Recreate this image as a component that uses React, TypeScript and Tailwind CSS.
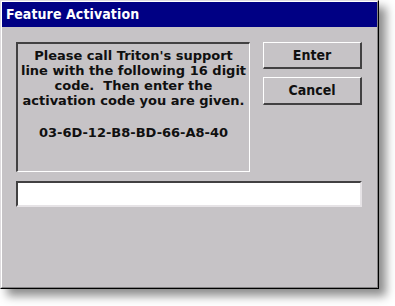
import React from "react";

export default function App() {
  const font = { fontFamily: '"DejaVu Sans Condensed", "DejaVu Sans", sans-serif' };
  const msg = { fontFamily: '"DejaVu Sans", sans-serif' };
  return (
    <div className="w-[395px] h-[306px] bg-white relative" style={font}>
      <div className="w-[379px] h-[289px] flex flex-col bg-[#c6c3c6] border-t border-l border-t-[#dedbde] border-l-[#dedbde] border-r border-b border-r-black border-b-black shadow-[7px_7px_9px_rgba(0,0,0,0.45)]">
        <div className="flex flex-col flex-1 border-t border-l border-white border-r border-b border-r-[#848284] border-b-[#848284]">
          <div className="h-[25px] bg-[#000084] text-white font-bold text-[14px] leading-[25px] pl-[4px] tracking-[0.1px]">
            Feature Activation
          </div>
          <div className="flex flex-col pl-[14px] pt-[15px]">
            <div className="flex">
              <div
                className="w-[234px] h-[130px] border-t-2 border-l-2 border-t-[#424142] border-l-[#424142] border-r border-b border-r-white border-b-white text-[13px] font-bold leading-[15px] text-[#101010] text-center pt-[4px] whitespace-nowrap"
                style={msg}
              >
                <div>Please call Triton's support</div>
                <div>line with the following 16 digit</div>
                <div>code.&nbsp; Then enter the</div>
                <div>activation code you are given.</div>
                <div className="mt-[17px]">03-6D-12-B8-BD-66-A8-40</div>
              </div>
              <div className="flex flex-col gap-[8px] ml-[13px]">
                <button className="w-[99px] h-[27px] border-t border-l border-white border-r-2 border-b-2 border-r-[#424142] border-b-[#424142] text-[14px] font-bold text-[#101010] flex items-center justify-center">
                  Enter
                </button>
                <button className="w-[99px] h-[28px] border-t border-l border-white border-r-2 border-b-2 border-r-[#424142] border-b-[#424142] text-[14px] font-bold text-[#101010] flex items-center justify-center">
                  Cancel
                </button>
              </div>
            </div>
            <div className="mt-[9px] w-[346px] h-[26px] bg-white border-t-2 border-l-2 border-t-[#424142] border-l-[#424142] border-r-2 border-b-2 border-r-[#e6e3e6] border-b-[#e6e3e6]" />
          </div>
        </div>
      </div>
    </div>
  );
}
